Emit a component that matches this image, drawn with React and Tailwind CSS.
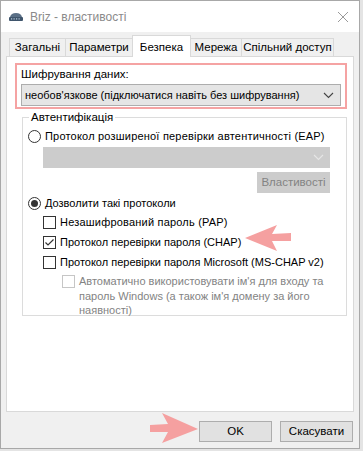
import React from 'react';

const font = { fontFamily: '"Liberation Sans", Arial, sans-serif' };

function Chevron({ color = '#444' }) {
  return (
    <svg width="11" height="7" viewBox="0 0 11 7" className="shrink-0">
      <path d="M1 1 L5.5 5.5 L10 1" fill="none" stroke={color} strokeWidth="1.1" />
    </svg>
  );
}

function Radio({ checked }) {
  return (
    <div className="w-[13px] h-[13px] rounded-full border border-[#333] bg-white flex items-center justify-center shrink-0">
      {checked && <div className="w-[7px] h-[7px] rounded-full bg-[#333]" />}
    </div>
  );
}

function Check({ checked, disabled }) {
  return (
    <div
      className={`w-[13px] h-[13px] border bg-white flex items-center justify-center shrink-0 ${
        disabled ? 'border-[#c6c6c6]' : 'border-[#333]'
      }`}
    >
      {checked && (
        <svg width="11" height="11" viewBox="0 0 11 11">
          <path d="M1.5 5.5 L4 8 L9.5 2.5" fill="none" stroke="#333" strokeWidth="1.2" />
        </svg>
      )}
    </div>
  );
}

function Tab({ label, active, w }) {
  return active ? (
    <div
      className={`h-[22px] -mb-px -mr-px ${w} bg-white border border-b-0 border-[#d9d9d9] flex items-start justify-center pt-[3px] text-[11.5px] whitespace-nowrap relative z-10`}
    >
      {label}
    </div>
  ) : (
    <div
      className={`h-[18px] ${w} bg-[#f0f0f0] border border-b-0 border-[#d9d9d9] -mr-px flex items-center justify-center text-[11.5px] whitespace-nowrap`}
    >
      {label}
    </div>
  );
}

export default function App() {
  return (
    <div
      className="w-[363px] h-[451px] bg-[#e4e4e4] relative overflow-hidden text-[11px] text-black"
      style={font}
    >
      <div className="w-[360px] h-[449px] border border-[#a8a8a8] flex flex-col bg-[#f0f0f0]">
        {/* Title bar */}
        <div className="h-[31px] bg-white flex items-center pl-[7px] pr-[10px] shrink-0">
          <svg width="16" height="10" viewBox="0 0 16 10" className="mr-[6px]">
            <path d="M2 5 Q3 1 8 1 Q13 1 14 5 Z" fill="#5a6f86" />
            <rect x="1" y="5" width="14" height="4" rx="1" fill="#3f556c" />
            <rect x="3" y="6.3" width="1.2" height="1.2" fill="#bcd" />
            <rect x="5.5" y="6.3" width="1.2" height="1.2" fill="#bcd" />
            <rect x="8" y="6.3" width="1.2" height="1.2" fill="#bcd" />
            <rect x="10.5" y="6.3" width="1.2" height="1.2" fill="#bcd" />
          </svg>
          <span className="text-[12px] text-[#8a8a8a]">Briz - властивості</span>
          <div className="flex-1" />
          <svg width="12" height="12" viewBox="0 0 12 12">
            <path d="M1 1 L11 11 M11 1 L1 11" stroke="#9a9a9a" strokeWidth="1" />
          </svg>
        </div>

        {/* Body */}
        <div className="flex-1 flex flex-col px-[5px] pt-[1px]">
          {/* Tabs */}
          <div className="h-[23px] flex items-end pl-[3px]">
            <Tab label="Загальні" w="w-[57px]" />
            <Tab label="Параметри" w="w-[68px]" />
            <Tab label="Безпека" w="w-[59px]" active />
            <Tab label="Мережа" w="w-[52px]" />
            <Tab label="Спільний доступ" w="w-[93px]" />
          </div>

          {/* Panel */}
          <div className="h-[356px] bg-white border border-[#d9d9d9] pl-[8px] pr-[4px] pt-[6px]">
            {/* Encryption */}
            <div className="w-[332px] h-[46px] border-2 border-[#f5a3a3] pl-[4px] pt-[1px]">
              <div className="leading-[16px] text-[11.5px]">Шифрування даних:</div>
              <div className="mt-[2px] w-[320px] h-[22px] bg-[#e5e5e5] border border-[#adadad] flex items-center pl-[3px] pr-[6px]">
                <span className="flex-1 min-w-0 whitespace-nowrap overflow-hidden">
                  необов'язкове (підключатися навіть без шифрування)
                </span>
                <Chevron />
              </div>
            </div>

            {/* Auth group */}
            <div className="relative mt-[8px] ml-[7px] w-[325px] h-[199px] border border-[#dcdcdc]">
              <div className="absolute -top-[9px] left-[6px] bg-white px-[2px] leading-[16px] text-[11.5px]">
                Автентифікація
              </div>
              <div className="pt-[9px] pl-[5px]">
                <div className="flex items-center gap-[4px] h-[18px]">
                  <Radio />
                  <span className="whitespace-nowrap tracking-[0.2px]">
                    Протокол розширеної перевірки автентичності (EAP)
                  </span>
                </div>
                <div className="mt-[2px] ml-[15px] w-[287px] h-[21px] bg-[#cccccc] flex items-center justify-end pr-[6px]">
                  <Chevron color="#e6e6e6" />
                </div>
                <div className="mt-[4px] ml-[229px] w-[73px] h-[21px] bg-[#cccccc] flex items-center justify-center text-[11.5px] text-[#838383]">
                  Властивості
                </div>
                <div className="mt-[1px] flex items-center gap-[4px] h-[18px]">
                  <Radio checked />
                  <span className="whitespace-nowrap">Дозволити такі протоколи</span>
                </div>
                <div className="ml-[15px] flex flex-col gap-[2px] mt-[1px]">
                  <div className="flex items-center gap-[4px] h-[18px]">
                    <Check />
                    <span className="whitespace-nowrap tracking-[0.2px]">Незашифрований пароль (PAP)</span>
                  </div>
                  <div className="flex items-center gap-[4px] h-[18px]">
                    <Check checked />
                    <span className="whitespace-nowrap">Протокол перевірки пароля (CHAP)</span>
                  </div>
                  <div className="flex items-center gap-[4px] h-[18px]">
                    <Check />
                    <span className="whitespace-nowrap">Протокол перевірки пароля Microsoft (MS-CHAP v2)</span>
                  </div>
                </div>
                <div className="ml-[34px] mt-[3px] flex items-start gap-[4px]">
                  <div className="mt-[1px]">
                    <Check disabled />
                  </div>
                  <span className="leading-[14.5px] text-[#838383] whitespace-nowrap">
                    Автоматично використовувати ім'я для входу та
                    <br />
                    пароль Windows (а також ім'я домену за його
                    <br />
                    наявності)
                  </span>
                </div>
              </div>
            </div>
          </div>

          {/* Buttons */}
          <div className="flex justify-end gap-[8px] mt-[9px] pr-[1px] text-[11.5px]">
            <div className="w-[73px] h-[21px] bg-[#e1e1e1] border border-[#adadad] flex items-center justify-center">
              OK
            </div>
            <div className="w-[73px] h-[21px] bg-[#e1e1e1] border border-[#adadad] flex items-center justify-center">
              Скасувати
            </div>
          </div>
        </div>
      </div>

      {/* Annotation arrows */}
      <svg className="absolute left-[243px] top-[224px]" width="50" height="28" viewBox="0 0 50 28">
        <path d="M2 14 L34 1 L29 10 L48 9 L48 17 L29 17 L34 27 Z" fill="#f5a0a0" />
      </svg>
      <svg className="absolute left-[148px] top-[412px]" width="52" height="32" viewBox="0 0 52 32">
        <path d="M50 17 L14 1 L20 12 L2 13 L2 20 L20 20 L14 31 Z" fill="#f5a0a0" />
      </svg>
    </div>
  );
}
